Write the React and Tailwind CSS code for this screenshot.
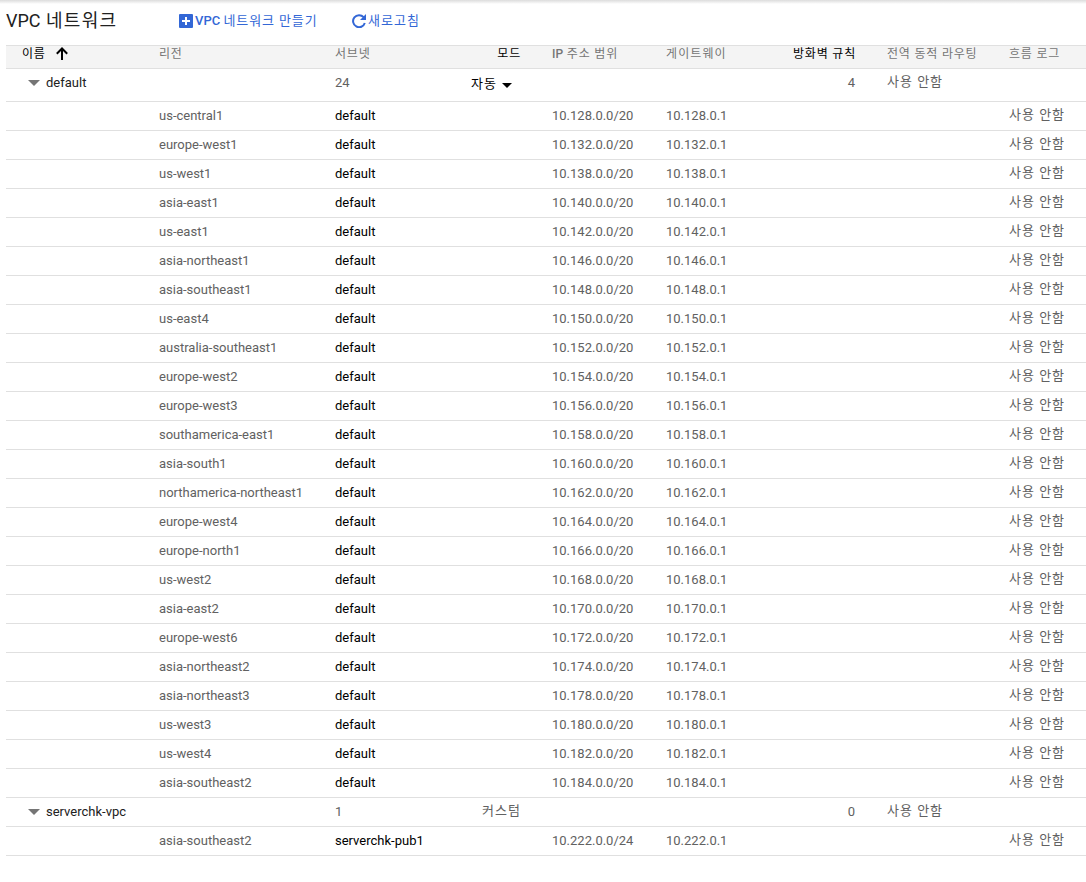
const GRID =
  "grid grid-cols-[153px_176px_110px_75px_146px_94px_95px_154px_77px] border-b border-[#e0e0e0]";

const NETWORKS = [
  {
    name: "default",
    mode: "자동",
    editable: true,
    firewall: 4,
    subnets: [
      ["us-central1", "10.128.0.0/20", "10.128.0.1"],
      ["europe-west1", "10.132.0.0/20", "10.132.0.1"],
      ["us-west1", "10.138.0.0/20", "10.138.0.1"],
      ["asia-east1", "10.140.0.0/20", "10.140.0.1"],
      ["us-east1", "10.142.0.0/20", "10.142.0.1"],
      ["asia-northeast1", "10.146.0.0/20", "10.146.0.1"],
      ["asia-southeast1", "10.148.0.0/20", "10.148.0.1"],
      ["us-east4", "10.150.0.0/20", "10.150.0.1"],
      ["australia-southeast1", "10.152.0.0/20", "10.152.0.1"],
      ["europe-west2", "10.154.0.0/20", "10.154.0.1"],
      ["europe-west3", "10.156.0.0/20", "10.156.0.1"],
      ["southamerica-east1", "10.158.0.0/20", "10.158.0.1"],
      ["asia-south1", "10.160.0.0/20", "10.160.0.1"],
      ["northamerica-northeast1", "10.162.0.0/20", "10.162.0.1"],
      ["europe-west4", "10.164.0.0/20", "10.164.0.1"],
      ["europe-north1", "10.166.0.0/20", "10.166.0.1"],
      ["us-west2", "10.168.0.0/20", "10.168.0.1"],
      ["asia-east2", "10.170.0.0/20", "10.170.0.1"],
      ["europe-west6", "10.172.0.0/20", "10.172.0.1"],
      ["asia-northeast2", "10.174.0.0/20", "10.174.0.1"],
      ["asia-northeast3", "10.178.0.0/20", "10.178.0.1"],
      ["us-west3", "10.180.0.0/20", "10.180.0.1"],
      ["us-west4", "10.182.0.0/20", "10.182.0.1"],
      ["asia-southeast2", "10.184.0.0/20", "10.184.0.1"],
    ],
    subnetName: "default",
  },
  {
    name: "serverchk-vpc",
    mode: "커스텀",
    editable: false,
    firewall: 0,
    subnets: [["asia-southeast2", "10.222.0.0/24", "10.222.0.1"]],
    subnetName: "serverchk-pub1",
  },
];

function Toolbar() {
  return (
    <header className="flex h-[45px] items-start bg-linear-to-b from-[#dcdcdc] to-white to-[4px]">
      <h1 className="w-[173px] pt-2 pl-[6px] text-[18px] leading-[26px] whitespace-nowrap text-[#212121]">
        VPC <span className="ml-px tracking-[1.3px]">네트워크</span>
      </h1>
      <button className="flex w-[172px] items-start pt-[11px] pl-[6px] text-[13px] leading-5 font-medium text-[#3367d6]">
        <svg className="mt-[3px] mr-[2px] shrink-0" width="14" height="14" viewBox="0 0 14 14">
          <rect width="14" height="14" rx="1" fill="#3367d6" />
          <path d="M7 3v8M3 7h8" stroke="#fff" strokeWidth="2" />
        </svg>
        <span className="whitespace-nowrap">
          VPC <span className="font-normal tracking-[0.9px]">네트워크 만들기</span>
        </span>
      </button>
      <button className="flex items-start pt-[11px] pl-[7px] text-[13px] leading-5 text-[#3367d6]">
        <svg className="mt-[3px] mr-[2px]" width="14" height="14" viewBox="0 0 14 14">
          <path d="M11.6 3.2A6 6 0 1 0 12.8 9" fill="none" stroke="#3367d6" strokeWidth="2" />
          <path d="M14 0v6H8z" fill="#3367d6" />
        </svg>
        <span className="tracking-[1px] whitespace-nowrap">새로고침</span>
      </button>
    </header>
  );
}

function TableHead() {
  return (
    <div
      className={`${GRID} h-6 border-t bg-[#f4f4f4] text-[12px] leading-[16px] tracking-[0.8px] whitespace-nowrap text-[#757575]`}
    >
      <span className="flex pl-4 text-black">
        이름
        <svg className="mt-[1px] ml-[10px]" width="12" height="13" viewBox="0 0 12 13">
          <path d="M6 13V1.5M.8 6.7L6 1.5l5.2 5.2" fill="none" stroke="#000" strokeWidth="2" />
        </svg>
      </span>
      <span>리전</span>
      <span>서브넷</span>
      <span className="-mr-px text-right text-black">모드</span>
      <span className="pl-8">
        <span className="font-medium tracking-normal">IP</span> 주소 범위
      </span>
      <span className="tracking-[1.1px]">게이트웨이</span>
      <span className="-mr-px text-right text-black">방화벽 규칙</span>
      <span className="pl-8">전역 동적 라우팅</span>
      <span>흐름 로그</span>
    </div>
  );
}

function NetworkRow({ network }) {
  return (
    <div className={`${GRID} ${network.editable ? "h-[33px]" : "h-[29px]"} leading-7 text-[#616161]`}>
      <span className="flex pl-[22px] text-[#212121]">
        <svg className="mt-[11px] mr-[6px]" width="12" height="6" viewBox="0 0 12 6">
          <path d="M0 0h12L6 6z" fill="#757575" />
        </svg>
        {network.name}
      </span>
      <span />
      <span>{network.subnets.length}</span>
      {network.editable ? (
        <span className="flex justify-end pt-[1px] pr-2 tracking-[1px] text-black">
          {network.mode}
          <svg className="mt-[13px] ml-[5px]" width="10" height="5" viewBox="0 0 10 5">
            <path d="M0 0h10L5 5z" fill="#000" />
          </svg>
        </span>
      ) : (
        <span className="-mr-px text-right leading-[26px] tracking-[1px]">{network.mode}</span>
      )}
      <span />
      <span />
      <span className="text-right">{network.firewall}</span>
      <span className="pl-8 leading-[26px] tracking-[1px]">사용 안함</span>
      <span />
    </div>
  );
}

function SubnetRow({ region, name, range, gateway }) {
  return (
    <div className={`${GRID} h-[29px] leading-7 whitespace-nowrap text-[#616161]`}>
      <span />
      <span>{region}</span>
      <span className="text-black">{name}</span>
      <span />
      <span className="pl-8">{range}</span>
      <span>{gateway}</span>
      <span />
      <span />
      <span className="leading-[26px] tracking-[1px]">사용 안함</span>
    </div>
  );
}

export default function App() {
  return (
    <div className="h-[882px] w-[1086px] overflow-hidden bg-white font-[Roboto,'Noto_Sans_CJK_KR',sans-serif] text-[13px]">
      <Toolbar />
      <main className="pl-[6px]">
        <TableHead />
        {NETWORKS.map((network) => (
          <section key={network.name}>
            <NetworkRow network={network} />
            {network.subnets.map(([region, range, gateway]) => (
              <SubnetRow
                key={region}
                region={region}
                name={network.subnetName}
                range={range}
                gateway={gateway}
              />
            ))}
          </section>
        ))}
      </main>
    </div>
  );
}
